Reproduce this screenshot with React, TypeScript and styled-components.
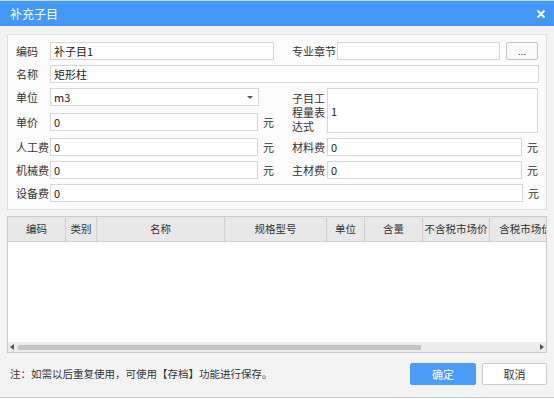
import styled, { createGlobalStyle } from "styled-components";

const GlobalStyle = createGlobalStyle`
  html, body {
    margin: 0;
    padding: 0;
    background: #ffffff;
  }
  body {
    font-family: "Noto Sans CJK SC", "Noto Sans", sans-serif;
    font-size: 11px;
    color: #333;
  }
  * {
    box-sizing: border-box;
  }
`;

// widths include each cell's right border
const columns = [
  { title: "编码", width: 58 },
  { title: "类别", width: 31 },
  { title: "名称", width: 128 },
  { title: "规格型号", width: 102 },
  { title: "单位", width: 38 },
  { title: "含量", width: 58 },
  { title: "不含税市场价", width: 67 },
  { title: "含税市场价", width: 72 },
];

function App() {
  return (
    <>
      <GlobalStyle />
      <Dialog>
        <TitleBar>
          <Title>补充子目</Title>
          <svg width="10" height="10" viewBox="0 0 10 10">
            <path d="M1.5 1.5 L8.5 8.5 M8.5 1.5 L1.5 8.5" stroke="#fff" strokeWidth="2" />
          </svg>
        </TitleBar>

        <Body>
          <FormPanel>
            <Row>
              <LeftSide>
                <Label $w={34}>编码</Label>
                <TextInput defaultValue="补子目1" />
              </LeftSide>
              <RightSide>
                <Label $w={45}>专业章节</Label>
                <TextInput defaultValue="" />
                <BrowseButton>...</BrowseButton>
              </RightSide>
            </Row>

            <Row>
              <Label $w={34}>名称</Label>
              <TextInput defaultValue="矩形柱" />
            </Row>

            <Block>
              <LeftStack>
                <Row>
                  <Label $w={34}>单位</Label>
                  <Select>
                    m3
                    <Caret />
                  </Select>
                </Row>
                <Row>
                  <Label $w={34}>单价</Label>
                  <TextInput defaultValue="0" />
                  <Unit>元</Unit>
                </Row>
              </LeftStack>
              <RightSide $tall>
                <WrapLabel>子目工程量表达式</WrapLabel>
                <ExprBox>1</ExprBox>
              </RightSide>
            </Block>

            <Row>
              <LeftSide>
                <Label $w={34}>人工费</Label>
                <TextInput defaultValue="0" />
                <Unit>元</Unit>
              </LeftSide>
              <RightSide>
                <Label $w={35}>材料费</Label>
                <TextInput defaultValue="0" />
                <Unit>元</Unit>
              </RightSide>
            </Row>

            <Row>
              <LeftSide>
                <Label $w={34}>机械费</Label>
                <TextInput defaultValue="0" />
                <Unit>元</Unit>
              </LeftSide>
              <RightSide>
                <Label $w={35}>主材费</Label>
                <TextInput defaultValue="0" />
                <Unit>元</Unit>
              </RightSide>
            </Row>

            <Row>
              <Label $w={34}>设备费</Label>
              <TextInput defaultValue="0" />
              <Unit>元</Unit>
            </Row>
          </FormPanel>

          <GridBox>
            <HeaderRow>
              {columns.map((c) => (
                <HeaderCell key={c.title} $w={c.width}>
                  {c.title}
                </HeaderCell>
              ))}
            </HeaderRow>
            <GridBody />
            <ScrollBar>
              <ArrowLeft />
              <Thumb />
              <ArrowRight />
            </ScrollBar>
          </GridBox>

          <Footer>
            <Note>注：如需以后重复使用，可使用【存档】功能进行保存。</Note>
            <Buttons>
              <PrimaryButton>确定</PrimaryButton>
              <PlainButton>取消</PlainButton>
            </Buttons>
          </Footer>
        </Body>
      </Dialog>
    </>
  );
}

export default App;

const Dialog = styled.div`
  width: 554px;
  height: 398px;
  display: flex;
  flex-direction: column;
  background: #f3f3f3;
  border-bottom: 1px solid #cdcdcd;
`;

const TitleBar = styled.div`
  height: 26px;
  flex: 0 0 26px;
  background: #4298f6;
  border-top: 1px solid #c9dcf0;
  display: flex;
  align-items: center;
  justify-content: space-between;
  padding: 0 8px 0 10px;
`;

const Title = styled.span`
  color: #ffffff;
  font-size: 12px;
  line-height: 1;
`;

const Body = styled.div`
  flex: 1;
  display: flex;
  flex-direction: column;
  padding: 8px 7px 0;
`;

const FormPanel = styled.div`
  background: #fbfbfb;
  border: 1px solid #dddddd;
  padding: 7px 7px 7px 8px;
  display: flex;
  flex-direction: column;
  gap: 5px;
`;

const Row = styled.div`
  display: flex;
  align-items: center;
  height: 18px;
`;

const LeftSide = styled.div`
  width: 258px;
  display: flex;
  align-items: center;
`;

const RightSide = styled.div<{ $tall?: boolean }>`
  width: 246px;
  margin-left: 18px;
  display: flex;
  align-items: ${(p) => (p.$tall ? "stretch" : "center")};
  height: ${(p) => (p.$tall ? "45px" : "18px")};
`;

const Block = styled.div`
  display: flex;
  height: 45px;
`;

const LeftStack = styled.div`
  width: 258px;
  display: flex;
  flex-direction: column;
  gap: 7px;
`;

const Label = styled.span<{ $w: number }>`
  flex: 0 0 ${(p) => p.$w}px;
  font-size: 11px;
  line-height: 18px;
  color: #333;
  white-space: nowrap;
`;

const WrapLabel = styled.span`
  flex: 0 0 35px;
  font-size: 11px;
  line-height: 14px;
  padding-top: 3px;
  color: #333;
`;

const TextInput = styled.input`
  flex: 1;
  min-width: 0;
  height: 18px;
  border: 1px solid #d6d6d6;
  background: #ffffff;
  padding: 0 3px;
  font-family: inherit;
  font-size: 11px;
  color: #222;
  outline: none;
`;

const Select = styled.div`
  width: 209px;
  height: 18px;
  border: 1px solid #d6d6d6;
  background: #ffffff;
  padding: 0 3px;
  font-size: 11px;
  line-height: 16px;
  color: #222;
  display: flex;
  align-items: center;
  justify-content: space-between;
`;

const Caret = styled.span`
  width: 0;
  height: 0;
  margin-right: 2px;
  border-left: 3px solid transparent;
  border-right: 3px solid transparent;
  border-top: 3px solid #555;
`;

const ExprBox = styled.div`
  flex: 1;
  border: 1px solid #d6d6d6;
  background: #ffffff;
  padding: 0 3px;
  font-size: 11px;
  color: #222;
  display: flex;
  align-items: center;
`;

const Unit = styled.span`
  flex: 0 0 15px;
  padding-left: 5px;
  font-size: 11px;
  line-height: 18px;
  color: #333;
`;

const BrowseButton = styled.div`
  flex: 0 0 32px;
  height: 18px;
  margin-left: 6px;
  border: 1px solid #c4c4c4;
  border-radius: 2px;
  background: #fafafa;
  font-size: 10px;
  line-height: 16px;
  text-align: center;
  color: #333;
`;

const GridBox = styled.div`
  margin-top: 6px;
  height: 137px;
  border: 1px solid #c9c9c9;
  background: #ffffff;
  display: flex;
  flex-direction: column;
  overflow: hidden;
`;

const HeaderRow = styled.div`
  display: flex;
  flex: 0 0 25px;
  background: #e8e8e8;
  border-bottom: 1px solid #cfcfcf;
  overflow: hidden;
`;

const HeaderCell = styled.div<{ $w: number }>`
  flex: 0 0 ${(p) => p.$w}px;
  border-right: 1px solid #cfcfcf;
  text-align: center;
  font-size: 10.5px;
  line-height: 24px;
  white-space: nowrap;
  overflow: hidden;
  color: #333;
`;

const GridBody = styled.div`
  flex: 1;
  background: #ffffff;
`;

const ScrollBar = styled.div`
  flex: 0 0 10px;
  background: #ececec;
  display: flex;
  align-items: center;
  padding: 0 2px;
`;

const ArrowLeft = styled.span`
  width: 0;
  height: 0;
  border-top: 3px solid transparent;
  border-bottom: 3px solid transparent;
  border-right: 4px solid #555;
`;

const ArrowRight = styled.span`
  width: 0;
  height: 0;
  margin-left: auto;
  border-top: 3px solid transparent;
  border-bottom: 3px solid transparent;
  border-left: 4px solid #555;
`;

const Thumb = styled.span`
  width: 403px;
  height: 5px;
  margin-left: 4px;
  border-radius: 1px;
  background: #c4c4c4;
`;

const Footer = styled.div`
  flex: 1;
  display: flex;
  align-items: flex-start;
  justify-content: space-between;
  padding-top: 10px;
`;

const Note = styled.span`
  margin-left: 3px;
  font-size: 10.5px;
  line-height: 22px;
  color: #333;
`;

const Buttons = styled.div`
  display: flex;
  gap: 6px;
`;

const PrimaryButton = styled.div`
  width: 66px;
  height: 22px;
  border: 1px solid #4a9df6;
  border-radius: 2px;
  background: #4a9df6;
  color: #ffffff;
  font-size: 11px;
  line-height: 20px;
  text-align: center;
`;

const PlainButton = styled.div`
  width: 65px;
  height: 22px;
  border: 1px solid #c9c9c9;
  border-radius: 2px;
  background: #ffffff;
  color: #333;
  font-size: 11px;
  line-height: 20px;
  text-align: center;
`;
